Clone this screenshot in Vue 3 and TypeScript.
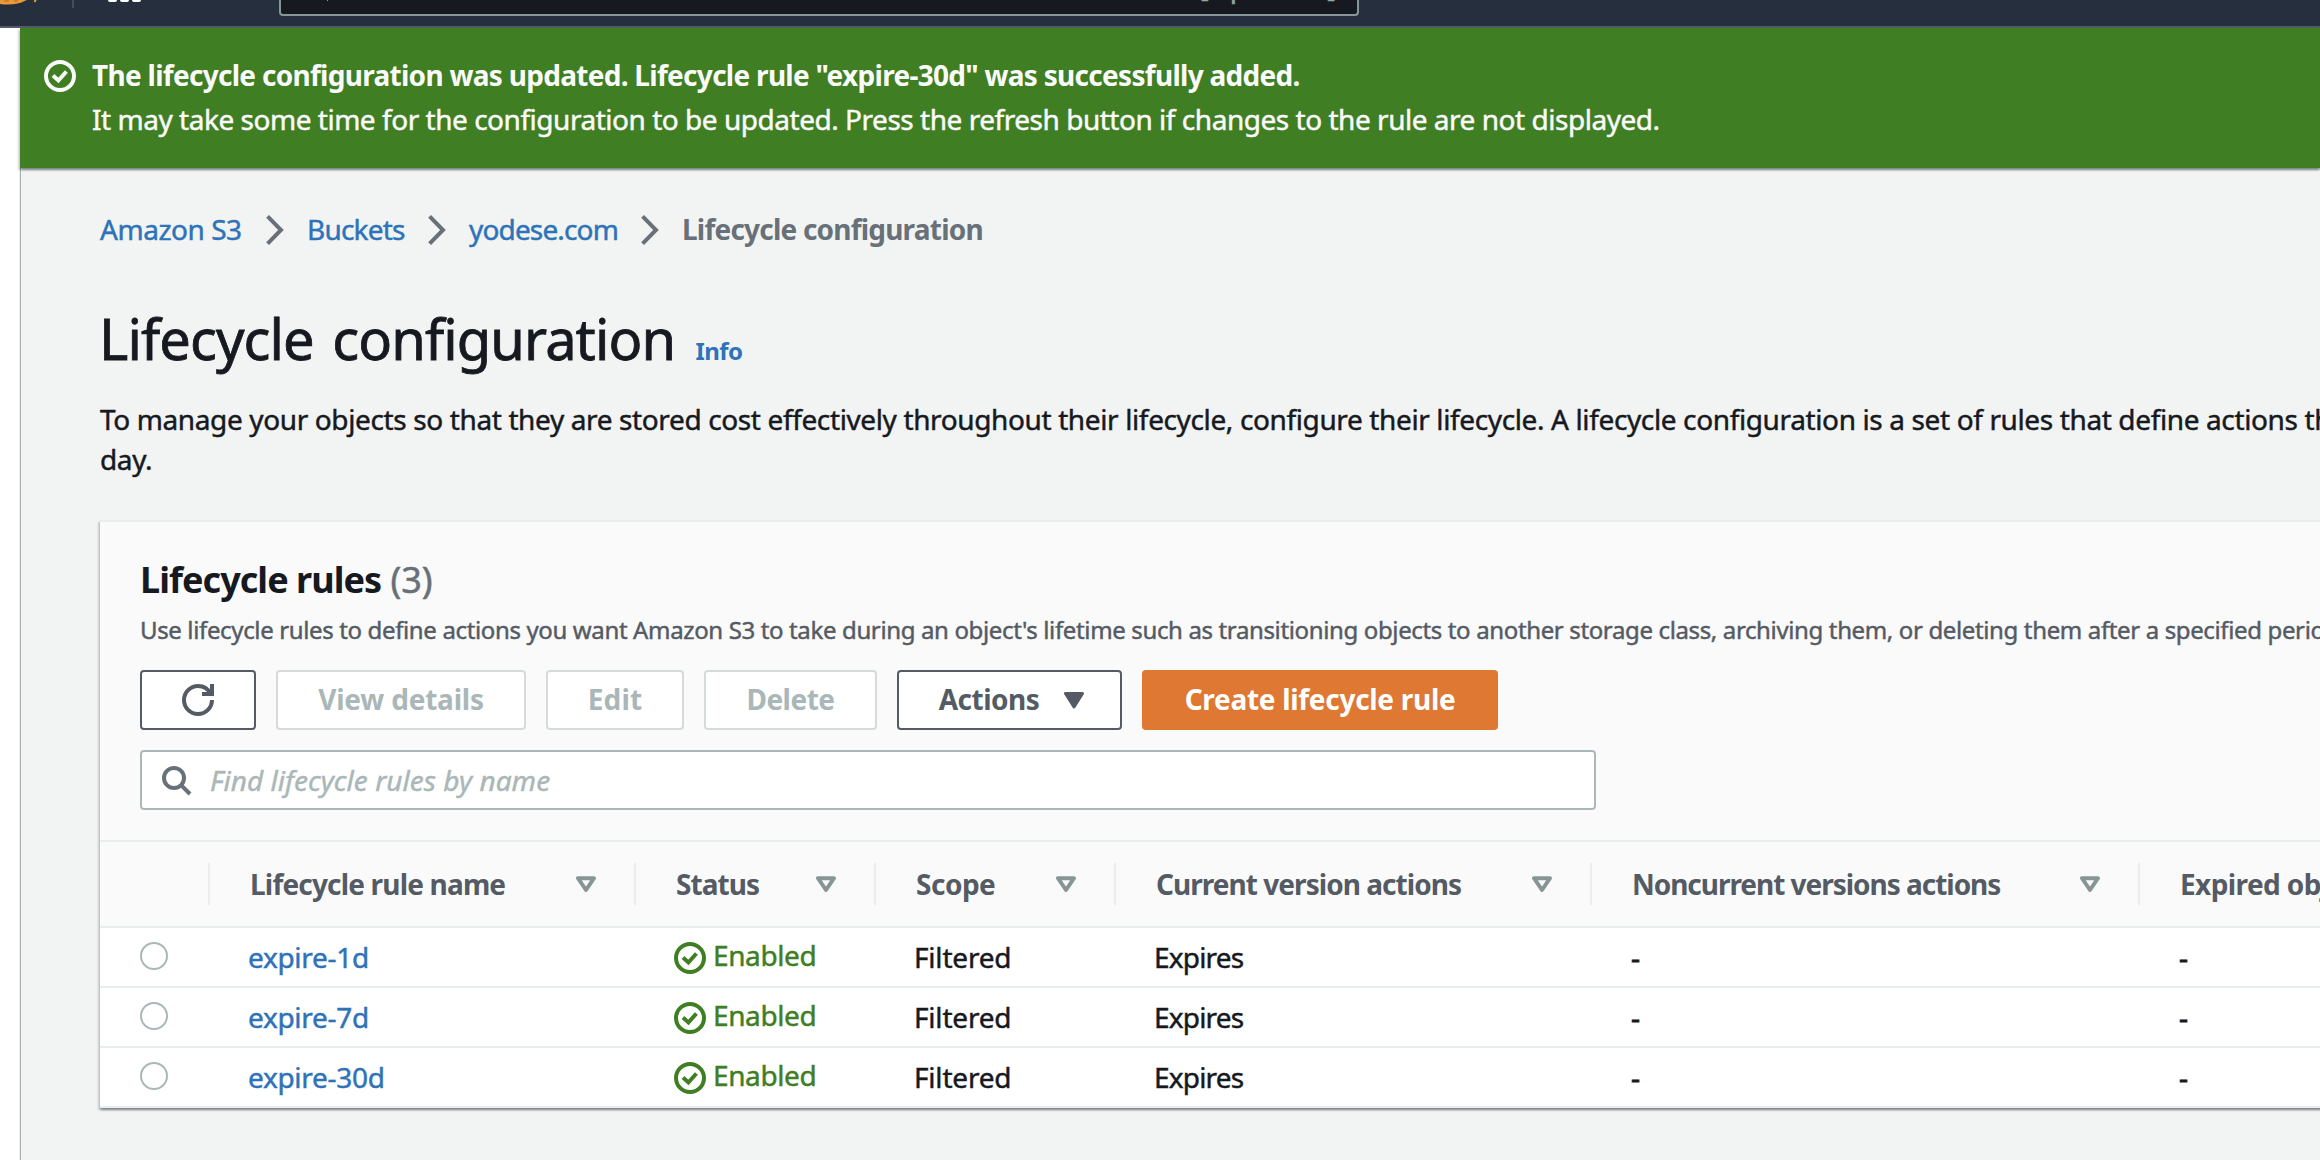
<script setup lang="ts">
interface Column {
  label: string
  width: number
  spacing: number
}

interface Rule {
  name: string
  status: string
  scope: string
  current: string
  noncurrent: string
  expired: string
}

const columns: Column[] = [
  { label: 'Lifecycle rule name', width: 426, spacing: -0.82 },
  { label: 'Status', width: 240, spacing: -0.92 },
  { label: 'Scope', width: 240, spacing: -0.5 },
  { label: 'Current version actions', width: 476, spacing: -0.96 },
  { label: 'Noncurrent versions actions', width: 548, spacing: -1.03 },
  { label: 'Expired object delete markers', width: 620, spacing: -0.6 },
]

const gridColumns = `110px ${columns.map((c) => `${c.width}px`).join(' ')}`

const makeRule = (name: string): Rule => ({
  name,
  status: 'Enabled',
  scope: 'Filtered',
  current: 'Expires',
  noncurrent: '-',
  expired: '-',
})

const rules: Rule[] = ['expire-1d', 'expire-7d', 'expire-30d'].map(makeRule)
</script>

<template>
  <div class="console">
    <header class="topbar">
      <svg class="logo" width="60" height="8" viewBox="0 0 60 8">
        <ellipse cx="8" cy="-9" rx="25" ry="13.6" fill="#ec9a37" />
        <path d="M4 1h5M14 1h4" stroke="#c57a2b" stroke-width="1.4" />
        <path d="M36 -1l-1.5 3" stroke="#ec9a37" stroke-width="2" />
      </svg>
      <span class="divider"></span>
      <span class="apps"><i></i><i></i><i></i></span>
      <div class="global-search"><span class="tick"></span><span class="shortcut">[Option+S]</span></div>
    </header>

    <main class="main">
      <section class="flash">
        <svg class="status-icon" viewBox="0 0 32 32">
          <circle cx="16" cy="16" r="14" />
          <path d="M9 15.6l5.4 4.9 8-9" />
        </svg>
        <div class="flash-text">
          <div class="flash-title">The lifecycle configuration was updated. Lifecycle rule "expire-30d" was successfully added.</div>
          <div class="flash-body">It may take some time for the configuration to be updated. Press the refresh button if changes to the rule are not displayed.</div>
        </div>
      </section>

      <div class="content">
        <nav class="crumbs">
          <a class="crumb c1">Amazon S3</a>
          <svg class="chevron" viewBox="0 0 18 30"><path d="M1.6 1.4L15 15 1.6 28.6" /></svg>
          <a class="crumb c2">Buckets</a>
          <svg class="chevron" viewBox="0 0 18 30"><path d="M1.6 1.4L15 15 1.6 28.6" /></svg>
          <a class="crumb c3">yodese.com</a>
          <svg class="chevron" viewBox="0 0 18 30"><path d="M1.6 1.4L15 15 1.6 28.6" /></svg>
          <span class="crumb current">Lifecycle configuration</span>
        </nav>

        <div class="heading">
          <h1>Lifecycle configuration</h1>
          <a class="info">Info</a>
        </div>
        <p class="lead">
          To manage your objects so that they are stored cost effectively throughout their lifecycle, configure their lifecycle. A lifecycle configuration is a set of rules that define actions that<br />
          day.
        </p>

        <section class="card">
          <div class="card-head">
            <h2>Lifecycle rules <span class="count">(3)</span></h2>
            <p class="card-desc">Use lifecycle rules to define actions you want Amazon S3 to take during an object's lifetime such as transitioning objects to another storage class, archiving them, or deleting them after a specified period of time.</p>
            <div class="buttons">
              <button class="btn refresh">
                <svg width="32" height="32" viewBox="0 0 16 16">
                  <path d="M15 8c0 3.87-3.13 7-7 7s-7-3.13-7-7 3.13-7 7-7c2.79 0 5.2 1.63 6.33 4" />
                  <path d="M10 5h5V0" />
                </svg>
              </button>
              <button class="btn off view">View details</button>
              <button class="btn off edit">Edit</button>
              <button class="btn off delete">Delete</button>
              <button class="btn actions">
                <span>Actions</span>
                <svg width="20" height="17" viewBox="0 0 20 17"><path d="M1.5 1.5h17L10 15z" /></svg>
              </button>
              <button class="btn primary">Create lifecycle rule</button>
            </div>
            <div class="filter">
              <svg width="34" height="34" viewBox="0 0 34 34">
                <circle cx="16" cy="14" r="10" />
                <path d="M22.8 20.8l9.2 9.2" />
              </svg>
              <span>Find lifecycle rules by name</span>
            </div>
          </div>

          <div class="row table-head" :style="{ gridTemplateColumns: gridColumns }">
            <div class="th"></div>
            <div v-for="col in columns" :key="col.label" class="th">
              <span :style="{ letterSpacing: `${col.spacing}px` }">{{ col.label }}</span>
              <svg width="20" height="17" viewBox="0 0 20 17"><path d="M2 2.2h16L10 14z" /></svg>
            </div>
          </div>

          <div v-for="rule in rules" :key="rule.name" class="row" :style="{ gridTemplateColumns: gridColumns }">
            <div class="td select"><span class="radio"></span></div>
            <div class="td name">{{ rule.name }}</div>
            <div class="td status">
              <svg class="status-icon" viewBox="0 0 32 32">
                <circle cx="16" cy="16" r="14" />
                <path d="M9 15.6l5.4 4.9 8-9" />
              </svg>
              <span>{{ rule.status }}</span>
            </div>
            <div class="td scope">{{ rule.scope }}</div>
            <div class="td expires">{{ rule.current }}</div>
            <div class="td dash">{{ rule.noncurrent }}</div>
            <div class="td dash">{{ rule.expired }}</div>
          </div>
        </section>
      </div>
    </main>
  </div>
</template>

<style>
body {
  background: #fff;
}
</style>

<style scoped>
.console {
  height: 1160px;
  overflow: hidden;
  display: flex;
  flex-direction: column;
  font-family: "Noto Sans", "Open Sans", sans-serif;
  font-size: 28px;
  color: #16191f;
  white-space: nowrap;
  -webkit-text-stroke-width: 0.45px;
}
svg {
  display: block;
  flex: none;
  fill: none;
}
h1, h2, p {
  margin: 0;
}

.topbar {
  flex: none;
  height: 26px;
  border-bottom: 2px solid #545b64;
  background: #252f3e;
  display: flex;
  align-items: flex-start;
}
.divider {
  width: 2px;
  height: 8px;
  margin-left: 12px;
  background: #414d5c;
}
.apps {
  display: flex;
  gap: 3px;
  margin-left: 34px;
}
.apps i {
  width: 9px;
  height: 2px;
  border-radius: 0 0 3px 3px;
  background: #fff;
}
.global-search {
  box-sizing: border-box;
  width: 1080px;
  height: 16px;
  margin-left: 138px;
  padding: 0 21px 0 46px;
  border: 2px solid #879596;
  border-top: 0;
  border-radius: 0 0 4px 4px;
  background: #16191f;
  display: flex;
  justify-content: space-between;
  overflow: hidden;
}
.tick {
  width: 1px;
  height: 1px;
  background: #879596;
}
.shortcut {
  margin-top: -34px;
  height: 40px;
  line-height: 40px;
  letter-spacing: -0.4px;
  color: #95a5a6;
}

.main {
  flex: 1;
  display: flex;
  flex-direction: column;
  margin-left: 20px;
}
.flash {
  position: relative;
  z-index: 1;
  flex: none;
  box-sizing: border-box;
  height: 140px;
  padding: 25px 0 0 24px;
  display: flex;
  background: #3f7e23;
  color: #fafafa;
  box-shadow: 0 2px 2px rgba(0, 28, 36, 0.3), 2px 2px 2px rgba(0, 28, 36, 0.15), -2px 2px 2px rgba(0, 28, 36, 0.15);
}
.status-icon {
  width: 32px;
  height: 32px;
  stroke: currentColor;
  stroke-width: 4;
}
.flash .status-icon {
  margin-top: 7px;
}
.flash-text {
  margin-left: 16px;
  line-height: 44px;
}
.flash-title {
  font-weight: 700;
  letter-spacing: -0.71px;
  -webkit-text-stroke-width: 0;
}
.flash-body {
  letter-spacing: -0.471px;
}

.content {
  flex: 1;
  margin-left: 1px;
  padding: 39px 0 0 79px;
  background: #f2f4f3;
  box-shadow: -1px 0 1px rgba(0, 28, 36, 0.35);
}
.crumbs {
  display: flex;
  align-items: center;
  height: 44px;
  line-height: 44px;
}
.crumb {
  color: #2e73b8;
}
.c1 {
  width: 166px;
  letter-spacing: -0.468px;
}
.c2 {
  width: 121px;
  margin-left: 23px;
  letter-spacing: -0.8px;
}
.c3 {
  width: 172px;
  margin-left: 23px;
  letter-spacing: -0.85px;
}
.crumbs .current {
  margin-left: 23px;
  font-weight: 700;
  letter-spacing: -0.79px;
  color: #687078;
  -webkit-text-stroke-width: 0;
}
.chevron {
  width: 18px;
  height: 30px;
  margin-top: 2px;
  stroke: #687078;
  stroke-width: 4;
}

.heading {
  display: flex;
  align-items: baseline;
  margin-top: 52px;
  height: 70px;
  line-height: 70px;
}
h1 {
  width: 596.5px;
  margin-left: -1px;
  font-size: 56px;
  font-weight: 400;
  letter-spacing: -0.92px;
  word-spacing: 5px;
  -webkit-text-stroke-width: 0.8px;
}
.info {
  font-size: 24px;
  font-weight: 700;
  letter-spacing: -0.6px;
  color: #2e73b8;
  -webkit-text-stroke-width: 0;
}
.lead {
  margin-top: 26px;
  line-height: 40px;
  letter-spacing: -0.373px;
}

.card {
  width: 2660px;
  margin-top: 41px;
  border-top: 2px solid #eaeded;
  background: #fff;
  box-shadow: 0 2px 2px rgba(0, 28, 36, 0.3), 2px 2px 2px rgba(0, 28, 36, 0.15), -2px 2px 2px rgba(0, 28, 36, 0.15);
}
.card-head {
  padding: 36px 40px 30px;
  background: #fafafa;
  border-bottom: 2px solid #eaeded;
}
h2 {
  font-size: 36px;
  line-height: 44px;
  font-weight: 700;
  letter-spacing: -0.95px;
  -webkit-text-stroke-width: 0;
}
.count {
  margin-left: 1px;
  font-weight: 400;
  letter-spacing: -0.1px;
  color: #687078;
  -webkit-text-stroke-width: 0.5px;
}
.card-desc {
  margin: 10px 0 0;
  font-size: 24px;
  line-height: 36px;
  letter-spacing: -0.361px;
  color: #545b64;
}
.buttons {
  display: flex;
  margin-top: 22px;
}
.btn {
  box-sizing: border-box;
  height: 60px;
  margin: 0 20px 0 0;
  padding: 0;
  border: 2px solid #545b64;
  border-radius: 4px;
  background: #fff;
  display: flex;
  align-items: flex-start;
  justify-content: center;
  font: 700 28px "Noto Sans", "Open Sans", sans-serif;
  line-height: 55px;
  color: #545b64;
  -webkit-text-stroke-width: 0;
}
.off {
  border-color: #d5dbdb;
  color: #aab7b8;
}
.refresh {
  width: 116px;
  align-items: center;
}
.refresh svg {
  stroke: currentColor;
  stroke-width: 2;
}
.view {
  width: 250px;
  letter-spacing: -0.2px;
}
.edit {
  width: 138px;
  letter-spacing: 0.15px;
}
.delete {
  width: 173px;
  letter-spacing: -0.49px;
}
.actions {
  width: 225px;
  padding-left: 4px;
  letter-spacing: -0.51px;
}
.actions svg {
  margin: 20px 0 0 25px;
  fill: currentColor;
  stroke: currentColor;
  stroke-width: 3;
  stroke-linejoin: round;
}
.primary {
  width: 356px;
  border-color: #de7833;
  background: #de7833;
  color: #fff;
  letter-spacing: -0.29px;
}
.filter {
  box-sizing: border-box;
  width: 1456px;
  height: 60px;
  margin-top: 20px;
  padding-left: 16px;
  border: 2px solid #aab7b8;
  border-radius: 4px;
  background: #fff;
  display: flex;
}
.filter svg {
  margin-top: 12px;
  stroke: #687078;
  stroke-width: 4;
}
.filter span {
  margin-left: 18px;
  line-height: 56px;
  font-style: italic;
  letter-spacing: 0.04px;
  color: #aab7b8;
}

.row {
  display: grid;
  height: 58px;
  border-bottom: 2px solid #eaeded;
}
.table-head {
  height: 84px;
  background: #fafafa;
  -webkit-text-stroke-width: 0;
}
.th {
  box-sizing: border-box;
  height: 42px;
  margin-top: 21px;
  padding: 0 38px 0 40px;
  border-right: 2px solid #eaeded;
  display: flex;
  align-items: center;
  justify-content: space-between;
  font-weight: 700;
  line-height: 40px;
  color: #545b64;
}
.th span {
  margin-top: -1px;
}
.th svg {
  stroke: #879596;
  stroke-width: 4;
  stroke-linejoin: round;
}
.td {
  padding-left: 38px;
  line-height: 58px;
}
.td.select {
  padding: 14px 0 0 40px;
}
.radio {
  display: block;
  box-sizing: border-box;
  width: 28px;
  height: 28px;
  border: 2px solid #aab7b8;
  border-radius: 50%;
}
.name {
  color: #2e73b8;
  letter-spacing: -0.3px;
}
.scope {
  letter-spacing: -0.2px;
}
.expires {
  letter-spacing: -0.8px;
}
.dash {
  padding-left: 39px;
  -webkit-text-stroke-width: 0.8px;
}
.status {
  display: flex;
  color: #3f7e23;
}
.status .status-icon {
  margin-top: 14px;
}
.status span {
  margin-left: 7px;
  line-height: 54px;
  letter-spacing: -0.4px;
}
</style>
